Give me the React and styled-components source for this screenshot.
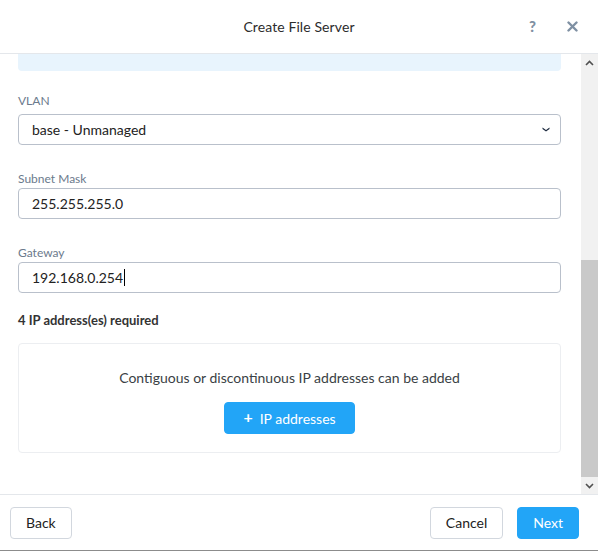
import React from "react";
import styled, { createGlobalStyle } from "styled-components";

const GlobalStyle = createGlobalStyle`
  html, body {
    margin: 0;
    padding: 0;
    background: #ffffff;
  }
  body {
    font-family: Lato, "Open Sans", "Liberation Sans", sans-serif;
    color: #333333;
  }
  * {
    box-sizing: border-box;
  }
`;

const ChevronDown = () => (
  <svg width="8" height="5" viewBox="0 0 8 5">
    <path d="M0.5 0.5 L4 3 L7.5 0.5 L7.5 2 L4 4.6 L0.5 2 Z" fill="#1d2b3f" />
  </svg>
);

const ArrowGlyph = ({ up }) => (
  <svg width="9" height="6" viewBox="0 0 9 6">
    <path
      d={up ? "M1 5 L4.5 1.5 L8 5" : "M1 1 L4.5 4.5 L8 1"}
      fill="none"
      stroke="#505050"
      strokeWidth="1.6"
    />
  </svg>
);

const CloseIcon = () => (
  <svg width="11" height="11" viewBox="0 0 11 11">
    <path
      d="M1.5 1.5 L9.5 9.5 M9.5 1.5 L1.5 9.5"
      stroke="#7f90a3"
      strokeWidth="2.4"
      strokeLinecap="round"
    />
  </svg>
);

const App = () => {
  return (
    <>
      <GlobalStyle />
      <Dialog>
        <Header>
          <span />
          <Title>Create File Server</Title>
          <HeaderActions>
            <HelpIcon>?</HelpIcon>
            <CloseIcon />
          </HeaderActions>
        </Header>

        <Body>
          <Content>
            <InfoBox>Each file server VM requires a unique IP address</InfoBox>

            <Field spaced>
              <Label wide>VLAN</Label>
              <Box>
                <BoxText>base - Unmanaged</BoxText>
                <ChevronDown />
              </Box>
            </Field>

            <Field spaced>
              <Label>Subnet Mask</Label>
              <Box>
                <BoxText>255.255.255.0</BoxText>
              </Box>
            </Field>

            <Field>
              <Label>Gateway</Label>
              <Box>
                <BoxText>
                  192.168.0.254
                  <Caret />
                </BoxText>
              </Box>
            </Field>

            <Required>4 IP address(es) required</Required>

            <AddressPanel>
              <PanelText>
                Contiguous or discontinuous IP addresses can be added
              </PanelText>
              <PrimaryButton wide>
                <Plus>+</Plus>
                IP addresses
              </PrimaryButton>
            </AddressPanel>
          </Content>

          <Scrollbar>
            <ScrollArrow>
              <ArrowGlyph up />
            </ScrollArrow>
            <Track>
              <Thumb />
            </Track>
            <ScrollArrow>
              <ArrowGlyph />
            </ScrollArrow>
          </Scrollbar>
        </Body>

        <Footer>
          <Button>Back</Button>
          <FooterRight>
            <Button>Cancel</Button>
            <PrimaryButton>Next</PrimaryButton>
          </FooterRight>
        </Footer>
      </Dialog>
    </>
  );
};

const Dialog = styled.div`
  width: 598px;
  height: 551px;
  display: flex;
  flex-direction: column;
  background: #ffffff;
  border-bottom: 1px solid #8c8c8c;
  overflow: hidden;
`;

const Header = styled.div`
  height: 54px;
  flex-shrink: 0;
  display: grid;
  grid-template-columns: 1fr auto 1fr;
  align-items: center;
  border-bottom: 1px solid #e4e7eb;
  padding: 0 20px 1px 20px;
`;

const Title = styled.div`
  font-size: 14px;
  color: #2c2c2c;
  letter-spacing: 0.1px;
`;

const HeaderActions = styled.div`
  display: flex;
  align-items: center;
  justify-content: flex-end;
  gap: 31px;
`;

const HelpIcon = styled.span`
  font-size: 15px;
  font-weight: 900;
  color: #7f90a3;
  line-height: 1;
`;

const Body = styled.div`
  flex: 1;
  min-height: 0;
  display: flex;
`;

const Content = styled.div`
  flex: 1;
  display: flex;
  flex-direction: column;
  justify-content: flex-end;
  overflow: hidden;
  padding: 0 20px 41px 18px;

  > * {
    flex-shrink: 0;
  }
`;

const InfoBox = styled.div`
  background: #e8f4fd;
  border-radius: 4px;
  padding: 12px 16px 17px;
  font-size: 13px;
  line-height: 16px;
  color: #2a6fa8;
  margin-bottom: 22px;
`;

const Field = styled.div`
  display: flex;
  flex-direction: column;
  margin-bottom: ${(p) => (p.spaced ? "26px" : "19px")};
`;

const Label = styled.div`
  font-size: 12px;
  line-height: 16px;
  color: #6b7a8c;
  margin-bottom: ${(p) => (p.wide ? "5px" : "1px")};
`;

const Box = styled.div`
  height: 31px;
  border: 1px solid #b9c0cb;
  border-radius: 4px;
  display: flex;
  align-items: center;
  justify-content: space-between;
  padding: 0 10px 0 13px;
  background: #ffffff;
`;

const BoxText = styled.span`
  font-size: 14px;
  color: #222222;
  display: flex;
  align-items: center;
`;

const Caret = styled.span`
  display: inline-block;
  width: 1px;
  height: 17px;
  background: #000000;
  margin-left: 1px;
`;

const Required = styled.div`
  font-size: 13px;
  font-weight: 700;
  line-height: 16px;
  color: #333333;
  margin-bottom: 15px;
`;

const AddressPanel = styled.div`
  height: 110px;
  border: 1px solid #eceef1;
  border-radius: 4px;
  display: flex;
  flex-direction: column;
  align-items: center;
  padding-top: 25px;
  gap: 16px;
`;

const PanelText = styled.div`
  font-size: 14px;
  line-height: 17px;
  color: #3a3f45;
`;

const Button = styled.button`
  height: 32px;
  padding: 0 ${(p) => (p.wide ? "18px" : "15px")};
  border: 1px solid #d2d7de;
  border-radius: 4px;
  background: #ffffff;
  color: #222222;
  font-family: Lato, "Open Sans", "Liberation Sans", sans-serif;
  font-size: 14px;
  display: inline-flex;
  align-items: center;
  gap: 7px;
  cursor: pointer;
`;

const PrimaryButton = styled(Button)`
  background: #22a5f7;
  border-color: #22a5f7;
  color: #ffffff;
`;

const Plus = styled.span`
  font-size: 16px;
  font-weight: 700;
  line-height: 1;
  margin-top: -2px;
`;

const Scrollbar = styled.div`
  width: 17px;
  flex-shrink: 0;
  display: flex;
  flex-direction: column;
  background: #f1f1f1;
`;

const ScrollArrow = styled.div`
  height: 17px;
  display: flex;
  align-items: center;
  justify-content: center;
`;

const Track = styled.div`
  flex: 1;
  display: flex;
  flex-direction: column;
  justify-content: flex-end;
`;

const Thumb = styled.div`
  height: 217px;
  background: #c9c9c9;
`;

const Footer = styled.div`
  height: 56px;
  flex-shrink: 0;
  border-top: 1px solid #e4e7eb;
  display: flex;
  align-items: center;
  justify-content: space-between;
  padding: 0 19px 0 10px;
`;

const FooterRight = styled.div`
  display: flex;
  gap: 14px;
`;

export default App;
